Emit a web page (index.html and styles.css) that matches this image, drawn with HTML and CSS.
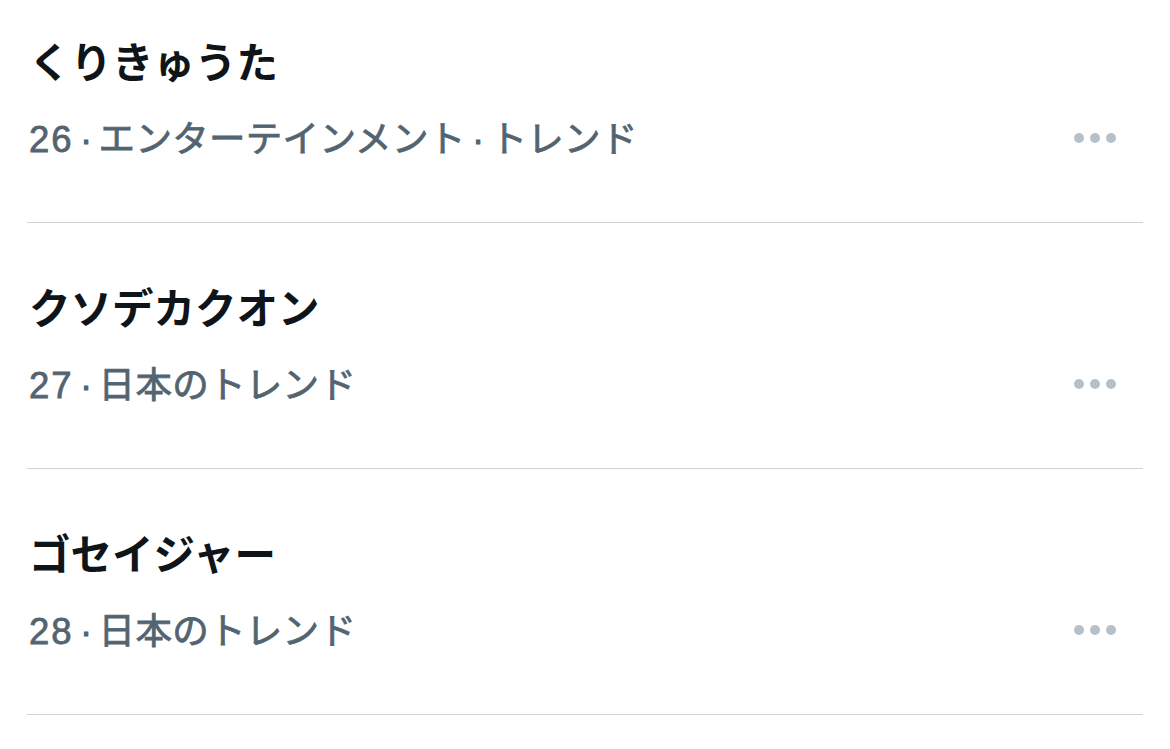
FILE: index.html
```html
<!DOCTYPE html>
<html lang="ja">
<head>
<meta charset="utf-8">
<link rel="stylesheet" href="styles.css">
</head>
<body>
<div class="list">
  <div class="item first">
    <div class="text">
      <div class="title">くりきゅうた</div>
      <div class="meta"><span class="rank">26</span><span class="sep">·</span>エンターテインメント<span class="sep">·</span>トレンド</div>
    </div>
    <div class="more"><span></span><span></span><span></span></div>
  </div>
  <div class="item">
    <div class="text">
      <div class="title">クソデカクオン</div>
      <div class="meta"><span class="rank">27</span><span class="sep">·</span>日本のトレンド</div>
    </div>
    <div class="more"><span></span><span></span><span></span></div>
  </div>
  <div class="item">
    <div class="text">
      <div class="title">ゴセイジャー</div>
      <div class="meta"><span class="rank">28</span><span class="sep">·</span>日本のトレンド</div>
    </div>
    <div class="more"><span></span><span></span><span></span></div>
  </div>
</div>
</body>
</html>
```
FILE: styles.css
```css
html, body {
  margin: 0;
  padding: 0;
  background: #ffffff;
  overflow: hidden;
}
body {
  font-family: "Liberation Sans", "Noto Sans CJK JP", sans-serif;
}
.list {
  margin: 0 27px;
}
.item {
  display: flex;
  align-items: flex-end;
  padding: 62px 27px 59px 2px;
  border-bottom: 1px solid #cfd3d6;
}
.item.first {
  margin-top: -23px;
}
.text {
  flex: 1;
  display: flex;
  flex-direction: column;
  gap: 24px;
}
.title {
  height: 50px;
  font-size: 41.5px;
  line-height: 50px;
  font-weight: 700;
  color: #0f1419;
  white-space: nowrap;
}
.meta {
  box-sizing: border-box;
  height: 50px;
  padding-top: 3px;
  font-size: 36.5px;
  line-height: 47px;
  font-weight: 400;
  letter-spacing: 0.3px;
  color: #536471;
  -webkit-text-stroke: 0.8px #536471;
  white-space: nowrap;
}
.rank {
  letter-spacing: 2px;
}
.sep {
  display: inline-block;
  width: 25px;
  text-align: center;
  letter-spacing: 0;
}
.more {
  height: 50px;
  display: flex;
  align-items: center;
  gap: 6px;
}
.more span {
  width: 10px;
  height: 10px;
  border-radius: 50%;
  background: #b6c0c8;
}
```
